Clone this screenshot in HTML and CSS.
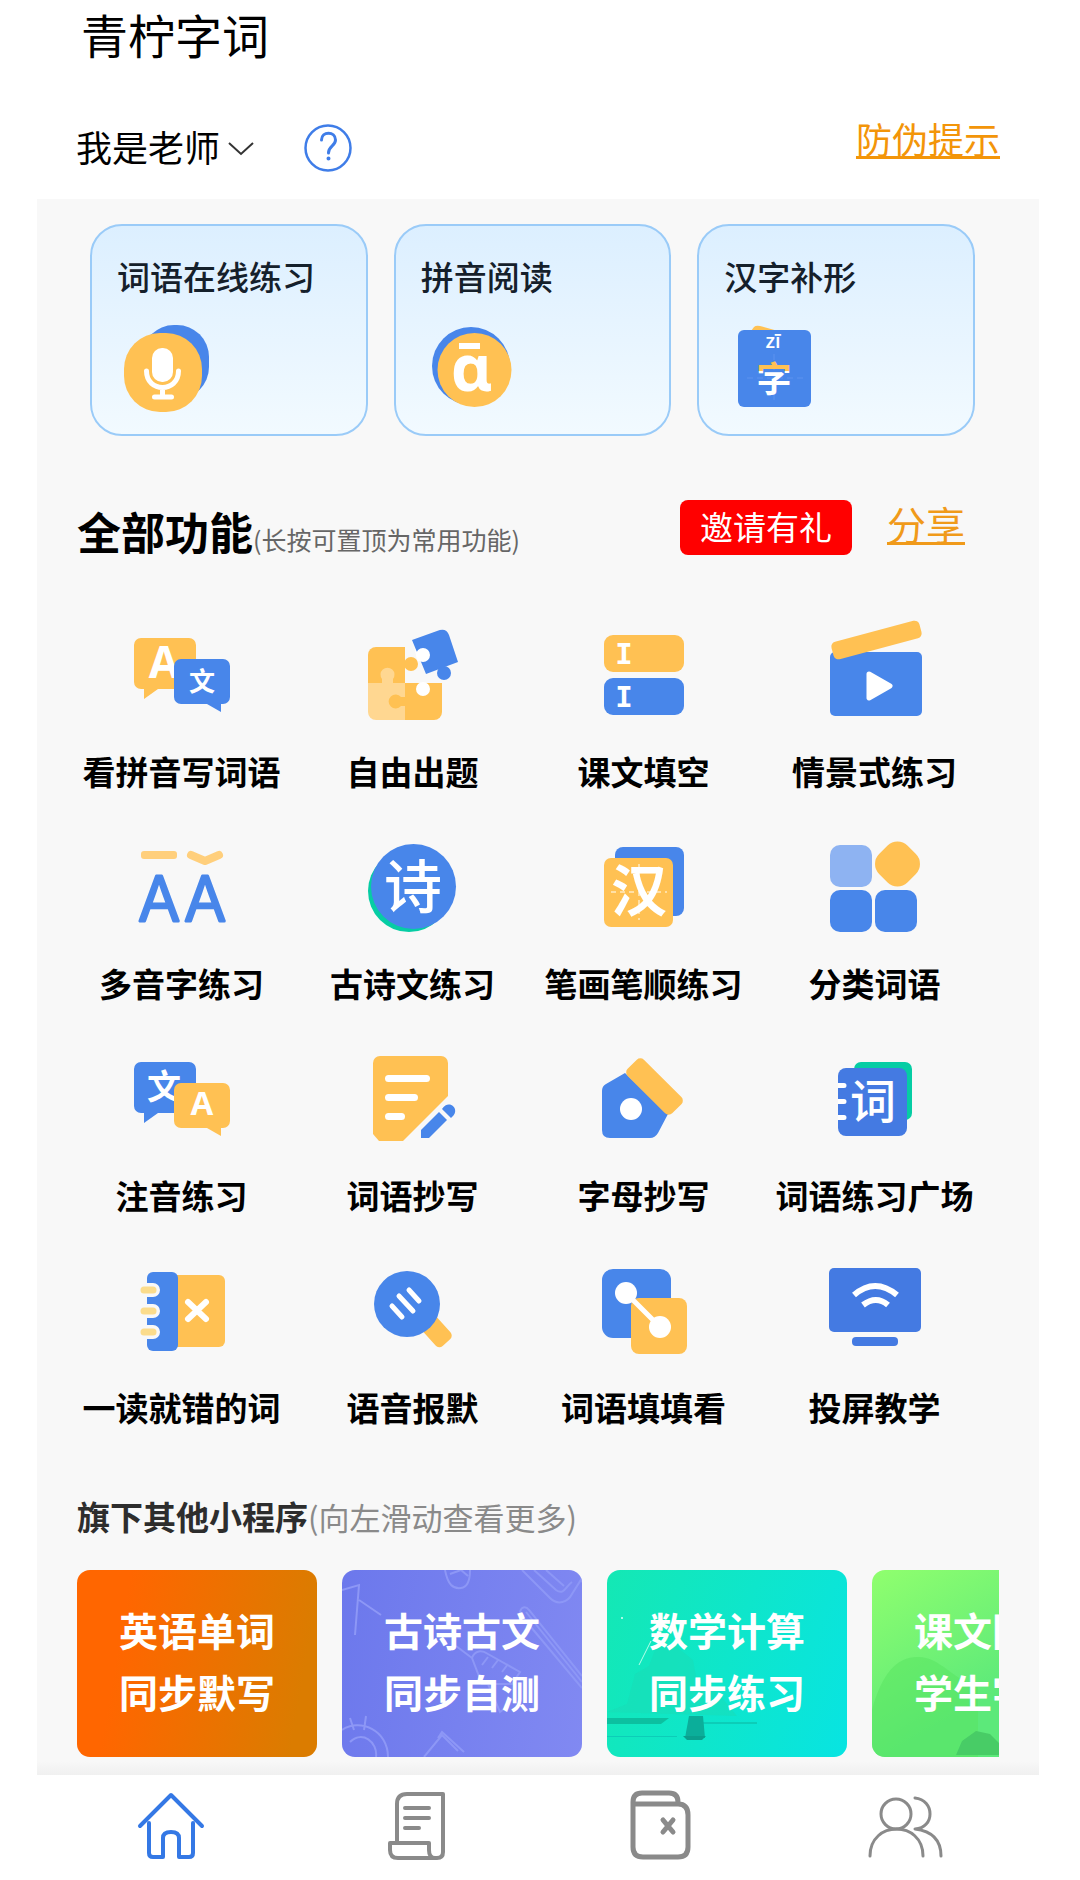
FILE: index.html
```html
<!DOCTYPE html>
<html lang="zh-CN">
<head>
    <meta charset="UTF-8">
    <meta name="viewport" content="width=device-width, initial-scale=1.0">
    <title>青柠字词</title>
    <link rel="stylesheet" href="styles.css">
</head>
<body>
    <header class="header">
        <h1 class="title">青柠字词</h1>
        <div class="user-row">
            <div class="role">
                <select class="role-select" aria-label="身份">
                    <option>我是老师</option>
                    <option>我是学生</option>
                </select>
                <svg class="role-arrow" width="26" height="14" viewBox="0 0 26 14" fill="none" stroke="#333" stroke-width="2"><path d="M1 1l12 11L25 1"/></svg>
            </div>
            <button class="help-btn" type="button" aria-label="帮助">
                <svg width="48" height="48" viewBox="0 0 48 48" fill="none" stroke="#3f7de8"><circle cx="24" cy="24" r="22.500" stroke-width="2.500"/><path d="M17.500 16c0-9 14-9 14 0 0 6-7 6-7 13" stroke-width="3" stroke-linecap="round"/><circle cx="24.500" cy="34.500" r="1" stroke-width="2"/></svg>
            </button>
            <a class="tip-link" href="#">防伪提示</a>
        </div>
    </header>

    <main class="panel">
        <section class="cards">
            <a class="card" href="#">
                <span class="card-title">词语在线练习</span>
                <svg class="card-icon" viewBox="0 0 90 90">
                    <rect class="blue" x="22" y="3" width="67" height="74" rx="32"/>
                    <rect class="yellow" x="4" y="11" width="78" height="79" rx="36"/>
                    <rect class="white" x="32" y="26" width="21" height="34" rx="10"/>
                    <g class="line" stroke-width="5"><path d="M26.500 49c0 22 32 22 32 0M42.500 66v9M34.500 75h17"/></g>
                </svg>
            </a>
            <a class="card" href="#">
                <span class="card-title">拼音阅读</span>
                <svg class="card-icon" viewBox="0 0 90 90">
                    <circle class="blue" cx="47" cy="44" r="39"/>
                    <circle class="yellow" cx="50.500" cy="48" r="37"/>
                    <rect class="white" x="35" y="21" width="21" height="6"/>
                    <text class="glyph latin" x="47" y="69" font-size="64">ɑ</text>
                </svg>
            </a>
            <a class="card" href="#">
                <span class="card-title">汉字补形</span>
                <svg class="card-icon" viewBox="0 0 90 90">
                    <defs>
                        <linearGradient id="zi" gradientUnits="userSpaceOnUse" x1="0" y1="35" x2="0" y2="77">
                            <stop offset="0.340" stop-color="#ffc153"/>
                            <stop offset="0.340" stop-color="#fff"/>
                        </linearGradient>
                    </defs>
                    <path class="yellow" d="M24 9l3-4q2-2 6-1l18 5z"/>
                    <rect class="blue" x="11" y="8" width="73" height="77" rx="6"/>
                    <path d="M20 56h56M47 32v48" stroke="#5c92ef" stroke-width="1" stroke-dasharray="6 4"/>
                    <text class="glyph latin semi" x="46" y="26" font-size="20">zī</text>
                    <text class="glyph" x="47" y="70" font-size="35" fill="url(#zi)">字</text>
                </svg>
            </a>
        </section>

        <section class="all-head">
            <h2 class="all-title">全部功能<small>(长按可置顶为常用功能)</small></h2>
            <button class="invite-btn" type="button">邀请有礼</button>
            <a class="share-link" href="#">分享</a>
        </section>

        <nav class="features">
            <a class="feature" href="#">
                <svg viewBox="0 0 110 110">
                    <path class="yellow" d="M14 23h48a7 7 0 0 1 7 7v37a7 7 0 0 1-7 7H31L17 84V74h-3a7 7 0 0 1-7-7V30a7 7 0 0 1 7-7z"/>
                    <text class="glyph latin" x="37" y="63" font-size="44">A</text>
                    <path class="blue" d="M54 44h42a7 7 0 0 1 7 7v31a7 7 0 0 1-7 7h-2v8L80 89H54a7 7 0 0 1-7-7V51a7 7 0 0 1 7-7z"/>
                    <text class="glyph" x="75" y="76" font-size="26">文</text>
                </svg>
                <span>看拼音写词语</span>
            </a>
            <a class="feature" href="#">
                <svg viewBox="0 0 110 110">
                    <path class="yellow" d="M10 68V40a8 8 0 0 1 8-8h29v36z"/>
                    <circle class="yellow" cx="53" cy="49" r="7"/>
                    <path class="yellow" d="M47 68h37v29a8 8 0 0 1-8 8H47z"/>
                    <path class="sand" d="M10 68h37v37H18a8 8 0 0 1-8-8z"/>
                    <path class="sand" d="M24 68v-4a7 7 0 1 1 11 0v4z"/>
                    <path class="yellow" d="M47 82h-4a7 7 0 1 0 0 9h4z"/>
                    <circle class="white" cx="65" cy="74" r="7"/>
                    <path class="blue" d="M54 25l25-9q9-4 12 4l9 27-32 12z"/>
                    <circle class="blue" cx="86" cy="58" r="7"/>
                    <circle class="white" cx="65" cy="40" r="7"/>
                    <path class="white" d="M56 32l6 12-2 3z"/>
                </svg>
                <span>自由出题</span>
            </a>
            <a class="feature" href="#">
                <svg viewBox="0 0 110 110">
                    <rect class="yellow" x="15" y="20" width="80" height="37" rx="9"/>
                    <rect class="blue" x="15" y="63" width="80" height="37" rx="9"/>
                    <text class="glyph mono" x="35" y="49" font-size="29">I</text>
                    <text class="glyph mono" x="35" y="92" font-size="29">I</text>
                </svg>
                <span>课文填空</span>
            </a>
            <a class="feature" href="#">
                <svg viewBox="0 0 110 110">
                    <rect class="blue" x="10" y="37" width="92" height="64" rx="5"/>
                    <rect class="yellow" x="11" y="16" width="91" height="18" rx="5" transform="rotate(-15 56.500 25)"/>
                    <path class="white" d="M49 59l21 12-21 12z" stroke="#fff" stroke-width="5" stroke-linejoin="round"/>
                </svg>
                <span>情景式练习</span>
            </a>
            <a class="feature" href="#">
                <svg viewBox="0 0 110 110">
                    <rect x="14" y="24" width="36" height="8" rx="3" fill="#ffcf7c"/>
                    <path d="M64 28l14 6 14-6" fill="none" stroke="#ffcf7c" stroke-width="8" stroke-linecap="round" stroke-linejoin="round"/>
                    <g class="tone">
                        <text x="32" y="94">A</text>
                        <text x="78" y="94">A</text>
                    </g>
                </svg>
                <span>多音字练习</span>
            </a>
            <a class="feature" href="#">
                <svg viewBox="0 0 110 110">
                    <circle class="green" cx="51" cy="64" r="41"/>
                    <circle class="blue" cx="55.500" cy="59.500" r="42.500"/>
                    <text class="glyph medium" x="55" y="81" font-size="58">诗</text>
                </svg>
                <span>古诗文练习</span>
            </a>
            <a class="feature" href="#">
                <svg viewBox="0 0 110 110">
                    <rect class="blue" x="26" y="20" width="69" height="69" rx="8"/>
                    <rect class="yellow" x="15" y="31" width="69" height="69" rx="7"/>
                    <path d="M22 65h56M50 37v56" stroke="#ffe0a6" stroke-width="2" stroke-dasharray="5 4"/>
                    <text class="glyph" x="50" y="84" font-size="56">汉</text>
                </svg>
                <span>笔画笔顺练习</span>
            </a>
            <a class="feature" href="#">
                <svg viewBox="0 0 110 110">
                    <rect x="10" y="18" width="42" height="42" rx="10" fill="#8eb3f2"/>
                    <rect class="yellow" x="57.500" y="17" width="40" height="40" rx="14" transform="rotate(45 77.500 37)"/>
                    <rect class="blue" x="10" y="63" width="42" height="42" rx="10"/>
                    <rect class="blue" x="55" y="63" width="42" height="42" rx="10"/>
                </svg>
                <span>分类词语</span>
            </a>
            <a class="feature" href="#">
                <svg viewBox="0 0 110 110">
                    <path class="blue" d="M14 23h48a7 7 0 0 1 7 7v37a7 7 0 0 1-7 7H31L17 84V74h-3a7 7 0 0 1-7-7V30a7 7 0 0 1 7-7z"/>
                    <text class="glyph" x="37" y="60" font-size="34">文</text>
                    <path class="yellow" d="M54 44h42a7 7 0 0 1 7 7v31a7 7 0 0 1-7 7h-2v8L80 89H54a7 7 0 0 1-7-7V51a7 7 0 0 1 7-7z"/>
                    <text class="glyph latin" x="75" y="76" font-size="33">A</text>
                </svg>
                <span>注音练习</span>
            </a>
            <a class="feature" href="#">
                <svg viewBox="0 0 110 110">
                    <path class="yellow" d="M22 17h61a7 7 0 0 1 7 7v33L45 102H21l-6-7V24a7 7 0 0 1 7-7z"/>
                    <g class="line" stroke-width="7"><path d="M30.500 39.500h38M30.500 58.500h26M30.500 77.500h13"/></g>
                    <path class="blue" d="M63 99v-8l18-18 8 8-18 18zM84 70c7-11 20 1 9 9z"/>
                </svg>
                <span>词语抄写</span>
            </a>
            <a class="feature" href="#">
                <svg viewBox="0 0 110 110">
                    <path class="blue" d="M36 34L17 45q-4 2-4 7v39q0 8 8 8h40q5 0 8-5l10-19z"/>
                    <rect class="yellow" x="34" y="36" width="63" height="23" rx="5" transform="rotate(45 65.500 47.500)"/>
                    <circle class="white" cx="42" cy="70" r="11"/>
                </svg>
                <span>字母抄写</span>
            </a>
            <a class="feature" href="#">
                <svg viewBox="0 0 110 110">
                    <rect class="green" x="34" y="23" width="58" height="58" rx="7"/>
                    <rect class="blue-dark" x="18" y="29" width="69" height="68" rx="8"/>
                    <path class="white" d="M18 44h6a2 2 0 0 1 0 5h-6zM18 60h6a2 2 0 0 1 0 5h-6zM18 76h6a2 2 0 0 1 0 5h-6z"/>
                    <text class="glyph medium" x="53" y="79" font-size="46">词</text>
                </svg>
                <span>词语练习广场</span>
            </a>
            <a class="feature" href="#">
                <svg viewBox="0 0 110 110">
                    <path class="yellow" d="M50 24h42a6 6 0 0 1 6 6v60a6 6 0 0 1-6 6H50z"/>
                    <rect class="blue" x="20" y="21" width="31" height="79" rx="6"/>
                    <g stroke="#f8f8f8" stroke-width="14" stroke-linecap="round"><path d="M14 39h12M14 60h12M14 81h12"/></g>
                    <g stroke="#fbdc8c" stroke-width="7" stroke-linecap="round"><path d="M17 39h9M17 60h9M17 81h9"/></g>
                    <g class="line" stroke-width="6"><path d="M61 51l18 17M79 51L61 68"/></g>
                </svg>
                <span>一读就错的词</span>
            </a>
            <a class="feature" href="#">
                <svg viewBox="0 0 110 110">
                    <rect class="yellow" x="67" y="60" width="20" height="36" rx="5" transform="rotate(-42 77 79)"/>
                    <circle class="blue" cx="49" cy="53" r="33"/>
                    <g class="line" stroke-width="5"><path d="M34 55l10 11M41 45l14 15M51 39l10 11"/></g>
                </svg>
                <span>语音报默</span>
            </a>
            <a class="feature" href="#">
                <svg viewBox="0 0 110 110">
                    <rect class="blue" x="13" y="18" width="69" height="69" rx="11"/>
                    <rect class="yellow" x="42" y="47" width="56" height="56" rx="8"/>
                    <path class="line" d="M37 42l34 34" stroke-width="5"/>
                    <circle class="white" cx="37" cy="42" r="11"/>
                    <circle class="white" cx="71" cy="76" r="11"/>
                </svg>
                <span>词语填填看</span>
            </a>
            <a class="feature" href="#">
                <svg viewBox="0 0 110 110">
                    <rect class="blue-dark" x="9" y="17" width="92" height="64" rx="5"/>
                    <rect class="blue-dark" x="32" y="86" width="46" height="9" rx="4"/>
                    <path d="M34 44q21-18 43 0M43 54q13-10 25 0" fill="none" stroke="#fff" stroke-width="6"/>
                </svg>
                <span>投屏教学</span>
            </a>
        </nav>

        <h2 class="more-title">旗下其他小程序<small>(向左滑动查看更多)</small></h2>
        <div class="promos">
            <a class="promo promo-orange" href="#">
                <span>英语单词</span>
                <span>同步默写</span>
            </a>
            <a class="promo promo-purple" href="#">
                <svg class="promo-art" viewBox="0 0 240 187" fill="none" stroke="#8d97f6" stroke-width="2">
                    <path d="M0 20l17-5-4 50M17 30l22 15M103 0c3 15 8 19 16 18s9-10 9-18M108 4l11-4 7 6M180 0l28 28c8 8 18 4 22-4l10-16M192 0l22 20c8 6 10-4 16-8M204 0l18 16M178 44c0-8 6-8 9-4l53 66M178 44l62 74M184 42l56 70"/>
                    <path d="M130 88c3-8 10-8 16-4l32 18-8 12-30 0zM130 88l-16-12M140 95l6-8M150 98l6-8M160 102l6-8M146 114l12 28 8-6M0 160c18-12 46 0 46 27M8 172c12-12 28 0 26 15M12 160l-4-12M22 160l2-14M82 187l18-22 16 16M96 168l4-6 22 20"/>
                </svg>
                <span>古诗古文</span>
                <span>同步自测</span>
            </a>
            <a class="promo promo-teal" href="#">
                <svg class="promo-art" viewBox="0 0 240 187">
                    <path d="M0 142l20-8 8-30 14-8 6-16 18-6 20 16 4 22 20 10 20 24z" fill="#19dcb6" opacity="0.500"/>
                    <path d="M0 148h62l-8 6H0z" fill="#0cc0a0"/>
                    <path d="M90 152h60v2H90zM0 166h70v1H0z" fill="#0ccdb8"/>
                    <path d="M82 146h14l2 22H78z" fill="#0bae9a"/>
                    <path d="M76 166h23l-4 4H80z" fill="#0a9f8d"/>
                    <path d="M32 95l12-24" stroke="#b4ffea" stroke-width="1"/>
                    <circle cx="15" cy="48" r="1" fill="#dffff6"/>
                </svg>
                <span>数学计算</span>
                <span>同步练习</span>
            </a>
            <a class="promo promo-green" href="#">
                <svg class="promo-art" viewBox="0 0 240 187">
                    <path d="M0 140c10-36 24-53 46-53s34 22 60 30v70H0z" fill="#58e35f" opacity="0.500"/>
                    <path d="M84 185l6-14 14-10 14 3 16 16 10 5z" fill="#48cc66"/>
                </svg>
                <span>课文同步</span>
                <span>学生字词</span>
            </a>
        </div>
    </main>

    <footer class="tabbar">
        <a class="tab active" href="#" aria-label="首页">
            <svg viewBox="0 0 80 80" stroke-width="4"><path d="M9 40l31-31 31 31M18 37v30q0 4 4 4h10V52q0-6 8-6t8 6v19h10q4 0 4-4V37"/></svg>
        </a>
        <a class="tab" href="#" aria-label="练习">
            <svg viewBox="0 0 80 80" stroke-width="4"><path d="M21 56V18q0-10 10-10h36v58q0 6-6 6H22q-8 0-8-8v-7h39v7q0 8 6 8M29 22h24M29 32h24M29 42h14"/></svg>
        </a>
        <a class="tab" href="#" aria-label="错题">
            <svg viewBox="0 0 80 80" stroke-width="5"><path d="M13 18v-2q0-9 9-9h27q9 0 9 9v2M13 18v43q0 10 10 10h35q10 0 10-10V29q0-11-10-11H13zM43 34l10 12M53 34L43 46"/></svg>
        </a>
        <a class="tab" href="#" aria-label="我的">
            <svg viewBox="0 0 80 80" stroke-width="3"><circle cx="31" cy="28" r="15"/><path d="M5 70c0-36 53-36 53 0M50 12c20 2 20 30 0 31 16 2 26 10 26 27"/></svg>
        </a>
    </footer>
</body>
</html>
```
FILE: styles.css
```css
* { box-sizing: border-box; }
body { margin: 0; background: #fff; color: #000; font-family: "Noto Sans CJK SC", sans-serif; }
a { color: inherit; text-decoration: none; }
button { font-family: inherit; border: none; padding: 0; cursor: pointer; }
h1, h2 { margin: 0; }
small { line-height: 1; }
svg { display: block; }

/* header */
.header { padding: 6px 80px 17px 76px; }
.title { padding-left: 5px; font-size: 47px; line-height: 56px; font-weight: 400; }
.user-row { display: flex; align-items: flex-start; margin-top: 48px; }
.role { position: relative; }
.role-select { appearance: none; border: none; background: none; margin: 0; padding: 0 33px 0 0; height: 72px; font-family: inherit; font-size: 36px; color: #000; }
.role-arrow { position: absolute; right: 0; top: 32px; pointer-events: none; }
.help-btn { background: none; margin: 14px 0 0 50px; }
.tip-link { margin-left: auto; font-size: 36px; line-height: 56px; color: #f39509; text-decoration: underline; text-decoration-thickness: 3px; }

/* main panel */
.panel { margin: 0 41px 0 37px; padding: 25px 40px 18px; background: linear-gradient(to top, #f0f0f0, #f8f8f8 14px); }
.cards { display: grid; grid-template-columns: repeat(3, 1fr); gap: 26px; margin: 0 24px 0 13px; }
.card { border: 2px solid #9acbf8; border-radius: 32px; padding: 26px 25px 22px; background: linear-gradient(#dcefff, #f2faff); }
.card-title { display: block; margin-bottom: 22px; font-size: 33px; line-height: 48px; font-weight: 500; color: #15202b; white-space: nowrap; }
.card-icon { width: 90px; height: 90px; margin-left: 3px; }

.all-head { display: flex; align-items: flex-start; margin: 62px 34px 51px 0; }
.all-title { flex: 1; font-size: 44px; line-height: 66px; font-weight: 700; }
.all-title small { font-size: 25px; font-weight: 400; color: #666; }
.invite-btn { width: 172px; height: 55px; margin-top: 2px; padding-bottom: 2px; border-radius: 8px; background: #f00; color: #fff; font-size: 33px; line-height: 53px; }
.share-link { margin-left: 35px; font-size: 39px; line-height: 50px; color: #f09a1a; text-decoration: underline; text-decoration-thickness: 3px; }

/* feature grid */
.features { display: grid; grid-template-columns: repeat(4, 1fr); row-gap: 32px; margin: 0 9px 0 -11px; }
.feature { display: flex; flex-direction: column; align-items: center; gap: 22px; font-size: 33px; line-height: 48px; font-weight: 700; white-space: nowrap; }
.feature svg { width: 110px; height: 110px; }

/* icon parts */
.blue { fill: #4886ea; }
.blue-dark { fill: #447ae2; }
.yellow { fill: #ffc153; }
.sand { fill: #ffd791; }
.green { fill: #06cda4; }
.white { fill: #fff; }
.line { fill: none; stroke: #fff; stroke-linecap: round; }
.glyph { text-anchor: middle; font-weight: 700; }
.glyph:not([fill]) { fill: #fff; }
.latin { font-family: "Open Sans", "Noto Sans", sans-serif; }
.mono { font-family: "DejaVu Sans Mono", monospace; }
.medium { font-weight: 500; }
.semi { font-weight: 600; }
.tone { font-family: Inter, sans-serif; font-size: 62px; font-weight: 300; text-anchor: middle; fill: #4886ea; stroke: #4886ea; stroke-width: 3; stroke-linejoin: round; }

/* other mini programs */
.more-title { margin: 60px 0 29px; font-size: 33px; line-height: 50px; font-weight: 700; color: #2d2d2d; }
.more-title small { font-size: 31px; font-weight: 400; color: #8a8a8a; }
.promos { display: flex; gap: 25px; overflow-x: auto; scrollbar-width: none; }
.promo { position: relative; flex: 0 0 240px; height: 187px; padding-bottom: 8px; display: flex; flex-direction: column; align-items: center; justify-content: center; border-radius: 13px; overflow: hidden; color: #fff; font-size: 39px; line-height: 62px; font-weight: 700; }
.promo span { position: relative; }
.promo-art { position: absolute; left: 0; top: 0; width: 100%; height: 100%; }
.promo-orange { background: linear-gradient(100deg, #ff6600 20%, #db7c00 90%); }
.promo-purple { background: linear-gradient(100deg, #6c78ec, #8189f2); }
.promo-teal { background: linear-gradient(110deg, #14e8b4, #08e4e2); }
.promo-green { background: linear-gradient(150deg, #90ff6e, #5ce97a 60%); }

/* bottom tabs */
.tabbar { display: grid; grid-template-columns: repeat(4, 1fr); margin: 0 41px 0 37px; padding: 11px 12px 14px; }
.tab { display: flex; justify-content: center; }
.tab svg { width: 80px; height: 80px; fill: none; stroke: #8a8a8a; stroke-linecap: round; stroke-linejoin: round; }
.tab.active svg { stroke: #3478e5; }
```
